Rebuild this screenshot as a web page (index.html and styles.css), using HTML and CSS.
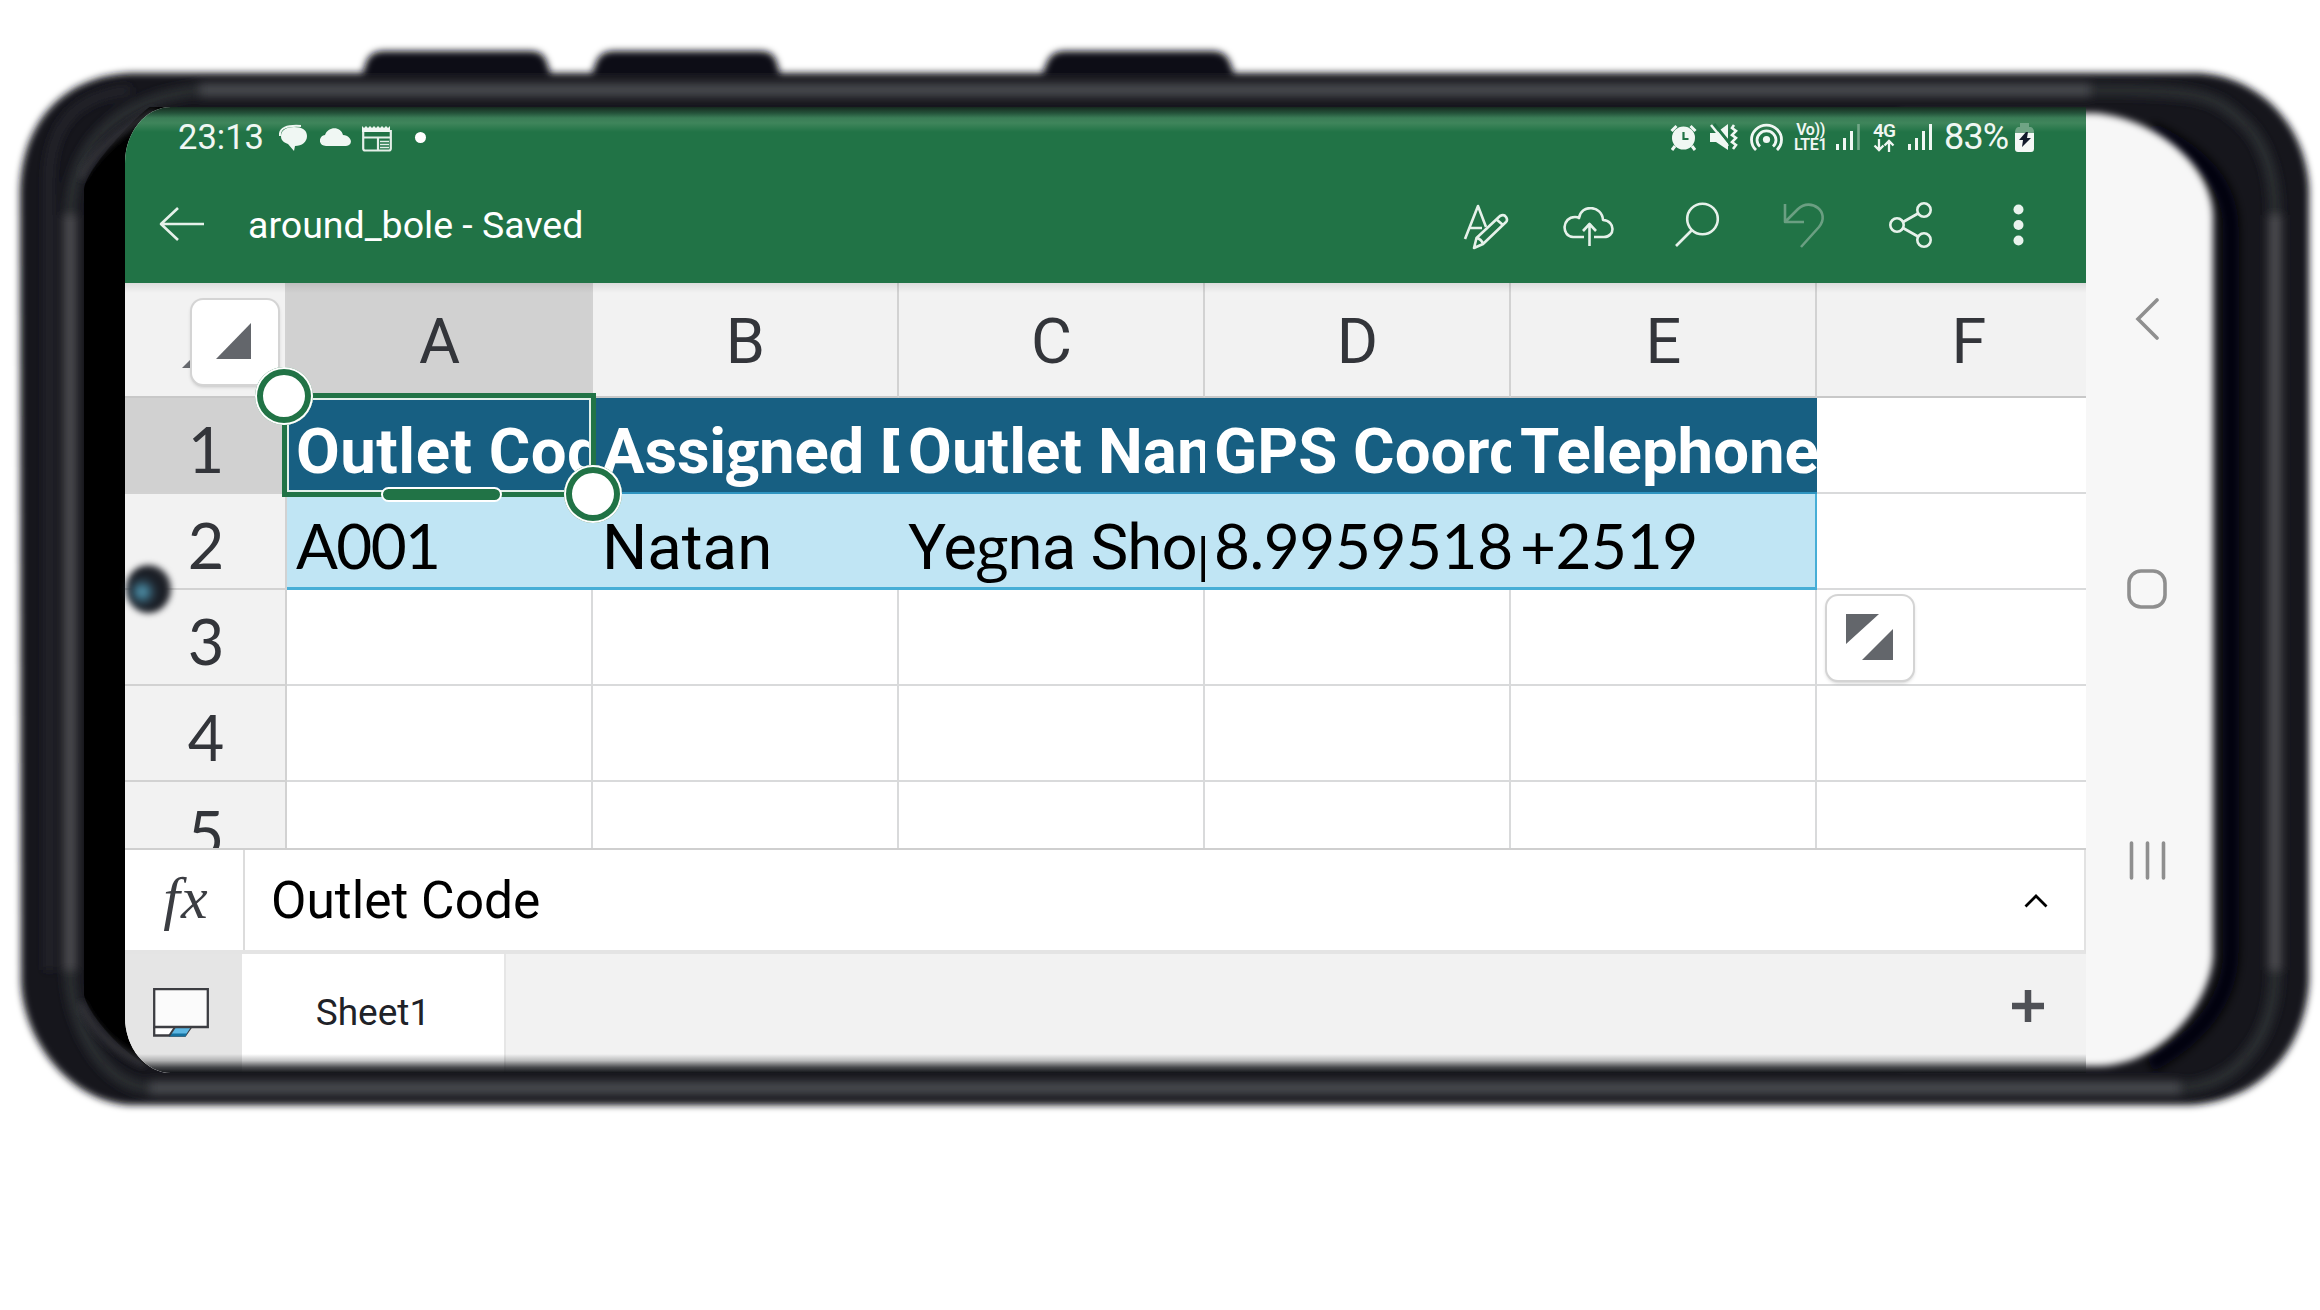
FILE: index.html
```html
<!DOCTYPE html>
<html lang="en">
<head>
<meta charset="utf-8">
<title>around_bole - Saved</title>
<link rel="stylesheet" href="styles.css">
</head>
<body>
<main class="phone">
  <svg class="frame" viewBox="0 0 2320 1310" aria-hidden="true">
    <defs>
      <filter id="soft" x="-5%" y="-5%" width="110%" height="110%"><feGaussianBlur stdDeviation="3.5"/></filter>
      <filter id="glow" x="-5%" y="-5%" width="110%" height="110%"><feGaussianBlur stdDeviation="5"/></filter>
    </defs>
    <g filter="url(#soft)" fill="#0d1015">
      <path d="M358 86L367 60Q372 51 384 51H530Q542 51 546 60L555 86Z"/>
      <path d="M587 86L597 60Q602 51 614 51H760Q772 51 776 60L784 86Z"/>
      <path d="M1037 86L1048 60Q1053 51 1065 51H1212Q1224 51 1229 60L1239 86Z"/>
      <path d="M20 190C22 120 65 76 130 73H2200C2265 78 2307 130 2309 190V980C2306 1050 2260 1101 2190 1105H130C70 1102 22 1040 21 980Z" fill="#14171c"/>
    </g>
    <g fill="none" filter="url(#glow)">
      <path d="M200 90H2090M150 1088H2180" stroke="#46484d" stroke-width="14"/>
      <path d="M2090 90C2180 90 2210 92 2235 115Q2275 145 2275 215M70 215C72 150 110 100 200 90M2180 1088C2235 1086 2275 1040 2275 970M150 1088C100 1085 70 1020 70 970" stroke="#2b2d32" stroke-width="12"/>
      <path d="M70 215V970M2275 215V970" stroke="#48494e" stroke-width="14"/>
      <path d="M49 180C50 120 80 95 130 90M49 180V970" stroke="#26282d" stroke-width="8"/>
      <path d="M2150 130Q2231 165 2231 230V950Q2231 1020 2150 1065" stroke="#050608" stroke-width="16"/>
    </g>
    <path d="M200 107H150C140 112 84 170 84 190V995C90 1020 135 1066 160 1070H300V107Z" fill="#000"/>
    <path d="M155 111Q100 140 80 178M80 1003Q100 1045 145 1064" fill="none" stroke="#34363b" stroke-width="7" filter="url(#soft)"/>
    <path d="M1900 113H2095C2155 118 2213 165 2213 218V955C2211 1000 2165 1064 2100 1066H1900Z" fill="#f7f7f7" filter="url(#soft)"/>
  </svg>

  <section class="app">
    <header class="top">
      <div class="status">
        <span class="clock">23:13</span>
        <svg class="s-chat" width="28" height="28" viewBox="0 0 28 28"><path fill="#f0f7f3" d="M15 3c8 0 13 3 13 9s-5 10-12 10l-1 5-6-7C4 18 2 16 2 12c0-6 6-9 13-9z"/><path d="M1 12C0 4 8 1 22 2" fill="none" stroke="#f0f7f3" stroke-width="2"/></svg>
        <svg class="s-cloud" width="31" height="18" viewBox="0 0 31 18"><path fill="#f0f7f3" d="M6 18C-2 18-2 8 5 7C8-2 21-2 23 7c10 1 10 11 3 11z"/></svg>
        <svg class="s-news" width="30" height="27" viewBox="0 0 30 27"><path fill="none" stroke="#e4efe8" stroke-width="2.2" d="M1.2 5v18.5a2 2 0 0 0 2 2h23.6a2 2 0 0 0 2-2V5M1 12.500h28M16 13v12"/><path fill="#f0f7f3" d="M0 1l2 2 2-2 2 2 2-2 2 2 2-2 2 2 2-2 2 2 2-2 2 2 2-2 2 2 2-2v6H0z"/><path stroke="#e4efe8" stroke-width="1.500" d="M18 16.500h9M18 19.500h9M18 22.500h9"/></svg>
        <i class="s-dot"></i>
        <div class="system">
          <svg width="27" height="27" viewBox="0 0 27 27"><circle cx="13.500" cy="14" r="11.500" fill="#f0f7f3"/><path d="M1.500 7l5-5M25.500 7l-5-5M5 22l-3 4M22 22l3 4" stroke="#f0f7f3" stroke-width="3"/><path d="M13.500 8v7h5" fill="none" stroke="#217346" stroke-width="2.200"/></svg>
          <svg class="s-mute" width="28" height="28" viewBox="0 0 28 28"><path fill="#f0f7f3" d="M0 10h6L18 1v26L6 19H0z"/><path d="M4 1l17 21" stroke="#217346" stroke-width="3"/><path d="M1 2l17 21" stroke="#f0f7f3" stroke-width="2.500"/><path d="M24 2l-2 3 4 3-4 4 4 3-4 4 4 3-3 4" fill="none" stroke="#f0f7f3" stroke-width="2.600"/></svg>
          <svg class="s-hot" width="33" height="28" viewBox="0 0 33 28"><g fill="none" stroke="#f0f7f3" stroke-width="2.800"><path d="M6 27A15 14.500 0 1 1 27 27"/><path d="M10 23.500A9.500 9 0 1 1 23 23.500"/></g><circle cx="16.500" cy="16.500" r="3.600" fill="#f0f7f3"/></svg>
          <span class="volte"><b>Vo))</b><b>LTE1</b></span>
          <svg class="s-bars1" width="24" height="26" viewBox="0 0 24 26"><path d="M1.500 20v6M8.500 14v12M15.500 7v19" stroke="#f0f7f3" stroke-width="3"/><path d="M22.500 0v26" stroke="#73a788" stroke-width="2.600"/></svg>
          <span class="lte"><b>4G</b><svg width="22" height="13" viewBox="0 0 22 13"><path d="M6 0v11M1.500 6.500L6 11l4.500-4.500M16 13V2M11.500 6.500L16 2l4.500 4.500" fill="none" stroke="#f0f7f3" stroke-width="2.300"/></svg></span>
          <svg class="s-bars2" width="24" height="26" viewBox="0 0 24 26"><path d="M1.500 20v6M8.500 14v12M15.500 7v19M22.500 0v26" stroke="#f0f7f3" stroke-width="3"/></svg>
          <span class="pct">83%</span>
          <svg class="s-bat" width="19" height="29" viewBox="0 0 19 29"><path fill="#6fa485" d="M5 0h9v4h2q3 1 3 6H0q0-5 3-6h2z"/><path fill="#f4f8f6" d="M0 10h19v16q0 3-3 3H3q-3 0-3-3z"/><path fill="#111a2b" d="M11 9h2l-1 6h4L7 24l1-7H4z"/></svg>
        </div>
      </div>
      <div class="toolbar">
        <svg width="46" height="36" viewBox="0 0 46 36" class="ico t-back"><path d="M45 18H2M19 2L2 18l17 16"/></svg>
        <h1>around_bole - Saved</h1>
        <svg width="46" height="46" viewBox="0 0 46 46" class="ico t-edit"><path d="M2 35L15 2l8 21M6 24h13"/><path d="M11 44l2.500-10L37 12q4-2 6 1t0 5L20 40zM13.500 34q5 1 6.500 6M33 15l7 6"/></svg>
        <svg width="51" height="40" viewBox="0 0 51 40" class="ico t-cloud"><path d="M21 30H10C-2 29-1 10 12 10c1 0 3 0 4 1C18-3 39-2 40 13c13 1 12 17 1 17H31M26.500 39V17M20 24l6.500-7 6.500 7"/></svg>
        <svg width="46" height="46" viewBox="0 0 46 46" class="ico t-find"><circle cx="28.500" cy="17" r="15.300"/><path d="M18 28L2 44"/></svg>
        <svg width="42" height="46" viewBox="0 0 42 46" class="ico t-undo"><path d="M2 2v18h19M2 20L15 7C28-5 48 10 36 25L18 45"/></svg>
        <svg width="43" height="46" viewBox="0 0 43 46" class="ico t-share"><circle cx="8" cy="23" r="6.700"/><circle cx="35" cy="8" r="6.700"/><circle cx="35" cy="38" r="6.700"/><path d="M14 20l15-8.500M14 26l15 8.500"/></svg>
        <svg width="11" height="42" viewBox="0 0 11 42" class="t-more"><g fill="#e9f3ed"><circle cx="5.500" cy="5.500" r="5"/><circle cx="5.500" cy="21" r="5"/><circle cx="5.500" cy="36.500" r="5"/></g></svg>
      </div>
    </header>

    <div class="grid">
      <div class="col corner"></div><div class="col on">A</div><div class="col">B</div><div class="col">C</div><div class="col">D</div><div class="col">E</div><div class="col f">F</div>
      <div class="row on">1</div><div class="cell th">Outlet Cod</div><div class="cell th as">Assi<span class="g">g</span>ned D</div><div class="cell th nm">Outlet Nam</div><div class="cell th gps">GPS Coord</div><div class="cell th tel">Telephone</div><div class="cell"></div>
      <div class="row">2</div><div class="cell td num a1">A001</div><div class="cell td">Natan</div><div class="cell td shop">Ye<span class="g">g</span>na Shop</div><div class="cell td num">8.9959518</div><div class="cell td num last">+2519</div><div class="cell"></div>
      <div class="row">3</div><div class="cell"></div><div class="cell"></div><div class="cell"></div><div class="cell"></div><div class="cell"></div><div class="cell"></div>
      <div class="row">4</div><div class="cell"></div><div class="cell"></div><div class="cell"></div><div class="cell"></div><div class="cell"></div><div class="cell"></div>
      <div class="row">5</div><div class="cell"></div><div class="cell"></div><div class="cell"></div><div class="cell"></div><div class="cell"></div><div class="cell"></div>
      <svg class="corner-mark" width="20" height="20" viewBox="0 0 20 20"><path d="M0 20L20 0v20z" fill="#66696e"/></svg>
      <div class="fab fab-all"><svg width="86" height="84" viewBox="1 1 86 84"><path d="M60 24v36H25z" fill="#63666b"/></svg></div>
      <div class="fab fab-size"><svg width="86" height="84" viewBox="1 1 86 84"><path d="M20 19h33L20 49zM67 34v31H36z" fill="#63666b"/></svg></div>
      <div class="selection"></div>
      <div class="grip"></div>
      <div class="handle h-start"></div>
      <div class="handle h-end"></div>
    </div>

    <div class="formula">
      <span class="fx">fx</span>
      <span class="value">Outlet Code</span>
      <svg width="24" height="15" viewBox="0 0 24 15"><path d="M1.500 13.500L12 3l10.500 10.500" fill="none" stroke="#000" stroke-width="2.800"/></svg>
    </div>

    <footer class="tabs">
      <div class="view"><svg width="56" height="49" viewBox="0 0 56 49"><path d="M1.200 39v8.500H32l6-8.500" fill="#fff" stroke="#3c3d42" stroke-width="2.300"/><path d="M22 39h16l-6 9H16z" fill="#5db7e3"/><path d="M17 45.500h17l-1.500 3H16z" fill="#15719f"/><path d="M22 39l-6 9" stroke="#3c3d42" stroke-width="2"/><path d="M1.200 1.200h53.600V39H1.200z" fill="#fbfbfb" stroke="#3c3d42" stroke-width="2.300"/></svg></div>
      <div class="tab">Sheet1</div>
      <svg class="plus" width="32" height="32" viewBox="0 0 32 32"><path d="M16 0v32M0 16h32" stroke="#4f5156" stroke-width="6.500"/></svg>
    </footer>
  </section>

  <nav class="nav">
    <svg width="24" height="42" viewBox="0 0 24 42"><path d="M22 2L3 21l19 19"/></svg>
    <svg width="40" height="40" viewBox="0 0 40 40"><rect x="2" y="2" width="36" height="36" rx="12"/></svg>
    <svg width="37" height="39" viewBox="0 0 37 39"><path d="M2.500 2v35M18.500 2v35M34.500 2v35"/></svg>
  </nav>

  <div class="camera"></div>
</main>
</body>
</html>
```
FILE: styles.css
```css
* { box-sizing: border-box; }
body { margin: 0; background: #fff; font-family: Roboto, sans-serif; }
svg { display: block; flex: none; }

.phone { position: relative; width: 2320px; height: 1310px; padding: 107px 0 0 125px; display: flex; align-items: flex-start; overflow: hidden; }
.frame { position: absolute; left: 0; top: 0; width: 2320px; height: 1310px; }

.app { position: relative; width: 1961px; height: 966px; overflow: hidden; border-radius: 46px 0 0 46px / 56px 0 0 56px; display: flex; flex-direction: column; background: #f2f2f2; }
.app::after { content: ""; position: absolute; left: 0; right: 0; bottom: 0; height: 19px; background: linear-gradient(rgba(17, 19, 23, 0), rgba(17, 19, 23, .25) 35%, rgba(17, 19, 23, .75) 70%, #111317); }

/* app bar */
.top { height: 176px; flex: none; color: #fff; background: linear-gradient(#16291f 0, #24523a 6px, #3b7d57 11px, #3f855b 16px, #217346 25px); }
.status { display: flex; align-items: center; height: 60px; padding-left: 53px; }
.clock { font-size: 34.500px; line-height: 40px; width: 87px; color: #f0f7f3; }
.s-chat { margin: 2px 0 0 14px; }
.s-cloud { margin-left: 13px; }
.s-news { margin: 2px 0 0 11px; }
.s-dot { width: 11px; height: 11px; margin-left: 23px; border-radius: 50%; background: #fff; }
.system { display: flex; align-items: center; margin-left: auto; padding-right: 52px; color: #f0f7f3; }
.s-mute { margin-left: 13px; }
.s-hot { margin-left: 12px; }
.volte { margin-left: 10px; width: 35px; height: 30px; display: flex; flex-direction: column; font-size: 16px; line-height: 15px; }
.volte b { font-weight: 600; height: 15px; text-align: center; white-space: nowrap; letter-spacing: -.4px; }
.s-bars1 { margin-left: 8px; }
.lte { display: flex; flex-direction: column; align-items: center; width: 24px; margin-left: 12px; font-size: 19px; line-height: 15px; }
.lte b { font-weight: 600; height: 16px; letter-spacing: -.8px; }
.s-bars2 { margin-left: 12px; }
.pct { width: 66px; margin-left: 12px; font-size: 36px; line-height: 40px; letter-spacing: -.8px; }
.s-bat { margin-left: 5px; }

.toolbar { display: flex; align-items: center; height: 116px; padding: 0 62px 0 34px; }
.toolbar h1 { margin: 0; width: 400px; font-size: 37.500px; font-weight: 400; line-height: 50px; margin-left: 43px; white-space: nowrap; }
.ico { fill: none; stroke: #e6f1ea; stroke-width: 2.6; stroke-linejoin: round; }
.t-back { margin-top: -2px; }
.t-edit { margin: 4px 0 0 auto; }
.t-cloud { margin: 4px 0 0 54px; }
.t-find { margin-left: 60px; }
.t-undo { margin-left: 63px; stroke: #6b9f82; }
.t-share { margin-left: 64px; }
.t-more { margin-left: 81px; }

/* worksheet */
.grid { position: relative; flex: none; height: 567px; overflow: hidden; display: grid; grid-template-columns: 162px repeat(5, 306px) 269px; grid-template-rows: 115px 96px 96px 96px 96px 68px; background: #fff; border-bottom: 2px solid #cfcfcf; }
.grid::before { content: ""; position: absolute; left: 0; right: 0; top: 0; height: 10px; background: linear-gradient(rgba(0, 0, 0, .09), rgba(0, 0, 0, 0)); }
.col { padding: 3px 0 0 1px; border-right: 2px solid #d2d2d2; border-bottom: 2px solid #c8c8c8; background: #f2f2f2; color: #33353a; font-size: 63px; line-height: 112px; text-align: center; }
.col:nth-child(7), .cell:nth-child(7n) { border-right: 0; }
.col.f { padding-left: 35px; }
.col.on, .row.on { background: #d1d1d1; }
.row { height: 96px; padding: 6px 0 0 2px; border-right: 2px solid #d2d2d2; border-bottom: 2px solid #d2d2d2; background: #f2f2f2; color: #33353a; font: 63px/89px Lato, sans-serif; text-align: center; }
.cell { height: 96px; padding: 9px 0 0 9px; border-right: 2px solid #d9dadb; border-bottom: 2px solid #d9dadb; overflow: hidden; white-space: nowrap; font: 63.500px/89px Roboto, sans-serif; }
.g { font: 59px/0 "Open Sans", sans-serif; font-weight: inherit; }
.th { border-right: 0; border-bottom-color: #2e94c0; background: #175f82; color: #fff; font-weight: 700; letter-spacing: .5px; }
.as { padding-left: 9px; letter-spacing: -.2px; }
.th.nm { letter-spacing: .1px; }
.th.gps { letter-spacing: 0; }
.tel { letter-spacing: 0; }
.td { border-right: 0; border-bottom: 3px solid #47aed6; background: #c0e5f4; color: #000; }
.shop { padding-left: 9px; letter-spacing: -.8px; }
.num { padding-top: 7px; padding-left: 9px; font: 62px/89px Lato, sans-serif; letter-spacing: -.4px; }
.a1 { letter-spacing: -1.600px; }
.last { border-right: 2px solid #47aed6; }

.corner-mark { position: absolute; left: 57px; top: 65px; }
.fab { position: absolute; width: 86px; height: 84px; background: #fff; border-radius: 11px; box-shadow: 0 0 0 2px #d4d4d4, 0 2px 4px rgba(0, 0, 0, .3); }
.fab-all { left: 67px; top: 17px; }
.fab-size { left: 1702px; top: 313px; }
.selection { position: absolute; left: 157px; top: 110px; width: 314px; height: 104px; border: 5px solid #217346; box-shadow: inset 0 0 0 2px #e3f0ea; }
.grip { position: absolute; left: 256px; top: 204px; width: 121px; height: 15px; border: 2px solid #fff; border-radius: 8px; background: #217346; }
.handle { position: absolute; width: 58px; height: 58px; border-radius: 50%; background: #fff; box-shadow: inset 0 0 0 2px #fff, inset 0 0 0 8px #217346; }
.h-start { left: 130px; top: 84px; }
.h-end { left: 439px; top: 182px; }

/* formula bar */
.formula { flex: none; display: flex; align-items: center; height: 104px; background: #fff; border-right: 2px solid #e2e2e2; border-bottom: 4px solid #e4e4e4; padding-right: 36px; }
.fx { align-self: stretch; width: 120px; padding-left: 4px; border-right: 2px solid #dcdcdc; text-align: center; color: #3b3d42; font: italic 60px/97px "Liberation Serif", serif; letter-spacing: 1px; }
.value { flex: 1; padding: 1px 0 0 26px; font-size: 51.500px; line-height: 90px; }

/* sheet tabs */
.tabs { flex: 1; display: flex; align-items: center; padding-right: 42px; }
.view { width: 117px; align-self: stretch; padding: 34px 0 0 28px; background: #e5e5e5; }
.tab { width: 264px; align-self: stretch; padding: 34px 0 0 0; background: #fff; border-right: 2px solid #e6e6e6; color: #202228; text-align: center; font-size: 37px; line-height: 50px; }
.plus { margin: -15px 0 0 auto; }

/* system navigation */
.nav { position: relative; width: 122px; height: 966px; padding: 191px 0 0; display: flex; flex-direction: column; align-items: center; }
.nav svg { fill: none; stroke: #8f8f8f; stroke-width: 3.6; stroke-linecap: round; }
.nav svg + svg { margin-top: 229px; }
.nav svg + svg + svg { margin-top: 232px; }

.camera { position: absolute; left: 126px; top: 565px; width: 45px; height: 48px; border-radius: 50%; filter: blur(3px); background: radial-gradient(circle at 36% 56%, #5c97ad 0, #3a7086 14%, #26333e 30%, #15181f 50%, #2e3036 70%); }
```
